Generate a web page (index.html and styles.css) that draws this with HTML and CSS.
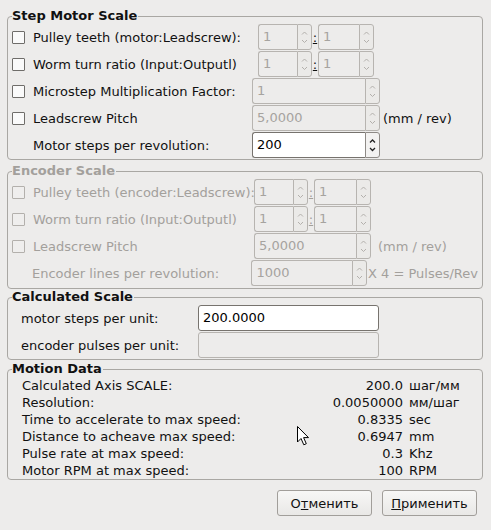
FILE: index.html
```html
<!DOCTYPE html>
<html>
<head>
<meta charset="utf-8">
<link rel="stylesheet" href="styles.css">
</head>
<body>
<div class="dialog">
  <fieldset class="group g-step">
    <legend>Step Motor Scale</legend>
    <div class="row">
      <div class="lbl"><span class="chk"></span>Pulley teeth (motor:Leadscrew):</div>
      <div class="cell cell-step pair-step">
        <div class="spin w-a dis"><div class="field">1</div><div class="btn"><svg width="13" height="24" viewBox="0 0 13 24"><path d="M4 9.5 L6.5 7 L9 9.5 M4 15 L6.5 17.5 L9 15"/></svg></div></div>
        <span class="colon">:</span>
        <div class="spin w-b dis"><div class="field">1</div><div class="btn"><svg width="13" height="24" viewBox="0 0 13 24"><path d="M4 9.5 L6.5 7 L9 9.5 M4 15 L6.5 17.5 L9 15"/></svg></div></div>
      </div>
    </div>
    <div class="row">
      <div class="lbl"><span class="chk"></span>Worm turn ratio (Input:Outputl)</div>
      <div class="cell cell-step pair-step">
        <div class="spin w-a dis"><div class="field">1</div><div class="btn"><svg width="13" height="24" viewBox="0 0 13 24"><path d="M4 9.5 L6.5 7 L9 9.5 M4 15 L6.5 17.5 L9 15"/></svg></div></div>
        <span class="colon">:</span>
        <div class="spin w-b dis"><div class="field">1</div><div class="btn"><svg width="13" height="24" viewBox="0 0 13 24"><path d="M4 9.5 L6.5 7 L9 9.5 M4 15 L6.5 17.5 L9 15"/></svg></div></div>
      </div>
    </div>
    <div class="row">
      <div class="lbl"><span class="chk"></span>Microstep Multiplication Factor:</div>
      <div class="cell cell-step">
        <div class="spin full dis"><div class="field">1</div><div class="btn"><svg width="13" height="24" viewBox="0 0 13 24"><path d="M4 9.5 L6.5 7 L9 9.5 M4 15 L6.5 17.5 L9 15"/></svg></div></div>
      </div>
    </div>
    <div class="row">
      <div class="lbl"><span class="chk"></span>Leadscrew Pitch</div>
      <div class="cell cell-step">
        <div class="spin full dis"><div class="field">5,0000</div><div class="btn"><svg width="13" height="24" viewBox="0 0 13 24"><path d="M4 9.5 L6.5 7 L9 9.5 M4 15 L6.5 17.5 L9 15"/></svg></div></div>
      </div>
      <span class="suffix">(mm / rev)</span>
    </div>
    <div class="row">
      <div class="lbl nochk">Motor steps per revolution:</div>
      <div class="cell cell-step">
        <div class="spin full on"><div class="field">200</div><div class="btn"><svg width="13" height="24" viewBox="0 0 13 24"><path d="M4 9.5 L6.5 7 L9 9.5 M4 15 L6.5 17.5 L9 15"/></svg></div></div>
      </div>
    </div>
  </fieldset>

  <fieldset class="group g-enc disabled">
    <legend>Encoder Scale</legend>
    <div class="row">
      <div class="lbl lbl-enc"><span class="chk"></span>Pulley teeth (encoder:Leadscrew):</div>
      <div class="cell cell-enc pair-enc">
        <div class="spin w-c dis"><div class="field">1</div><div class="btn"><svg width="13" height="24" viewBox="0 0 13 24"><path d="M4 9.5 L6.5 7 L9 9.5 M4 15 L6.5 17.5 L9 15"/></svg></div></div>
        <span class="colon">:</span>
        <div class="spin w-d dis"><div class="field">1</div><div class="btn"><svg width="13" height="24" viewBox="0 0 13 24"><path d="M4 9.5 L6.5 7 L9 9.5 M4 15 L6.5 17.5 L9 15"/></svg></div></div>
      </div>
    </div>
    <div class="row">
      <div class="lbl lbl-enc"><span class="chk"></span>Worm turn ratio (Input:Outputl)</div>
      <div class="cell cell-enc pair-enc">
        <div class="spin w-c dis"><div class="field">1</div><div class="btn"><svg width="13" height="24" viewBox="0 0 13 24"><path d="M4 9.5 L6.5 7 L9 9.5 M4 15 L6.5 17.5 L9 15"/></svg></div></div>
        <span class="colon">:</span>
        <div class="spin w-d dis"><div class="field">1</div><div class="btn"><svg width="13" height="24" viewBox="0 0 13 24"><path d="M4 9.5 L6.5 7 L9 9.5 M4 15 L6.5 17.5 L9 15"/></svg></div></div>
      </div>
    </div>
    <div class="row">
      <div class="lbl lbl-enc"><span class="chk"></span>Leadscrew Pitch</div>
      <div class="cell cell-enc">
        <div class="spin full dis"><div class="field">5,0000</div><div class="btn"><svg width="13" height="24" viewBox="0 0 13 24"><path d="M4 9.5 L6.5 7 L9 9.5 M4 15 L6.5 17.5 L9 15"/></svg></div></div>
      </div>
      <span class="suffix suffix-enc">(mm / rev)</span>
    </div>
    <div class="row">
      <div class="lbl lbl-enc nochk2">Encoder lines per revolution:</div>
      <div class="cell cell-enc">
        <div class="spin full dis"><div class="field">1000</div><div class="btn"><svg width="13" height="24" viewBox="0 0 13 24"><path d="M4 9.5 L6.5 7 L9 9.5 M4 15 L6.5 17.5 L9 15"/></svg></div></div>
      </div>
      <span class="suffix suffix-x4">X 4 = Pulses/Rev</span>
    </div>
  </fieldset>

  <fieldset class="group g-calc">
    <legend>Calculated Scale</legend>
    <div class="calc-row">
      <div class="calc-lbl">motor steps per unit:</div>
      <div class="line on">200.0000</div>
    </div>
    <div class="calc-row">
      <div class="calc-lbl">encoder pulses per unit:</div>
      <div class="line dis"></div>
    </div>
  </fieldset>

  <fieldset class="group g-motion">
    <legend>Motion Data</legend>
    <div class="motion">
      <span>Calculated Axis SCALE:</span><span class="num">200.0</span><span>шаг/мм</span>
      <span>Resolution:</span><span class="num">0.0050000</span><span>мм/шаг</span>
      <span>Time to accelerate to max speed:</span><span class="num">0.8335</span><span>sec</span>
      <span>Distance to acheave max speed:</span><span class="num">0.6947</span><span>mm</span>
      <span>Pulse rate at max speed:</span><span class="num">0.3</span><span>Khz</span>
      <span>Motor RPM at max speed:</span><span class="num">100</span><span>RPM</span>
    </div>
  </fieldset>

  <div class="buttons">
    <button class="pbtn">О<u>т</u>менить</button>
    <button class="pbtn"><u>П</u>рименить</button>
  </div>

  <svg class="cursor" width="13" height="21" viewBox="0 0 13 21"><path d="M0.5 0.5 L0.5 16 L4 12.5 L6.8 18.8 L9.3 17.7 L6.6 11.6 L11.5 11.6 Z" fill="#fff" stroke="#000" stroke-width="1" stroke-linejoin="miter"/></svg>
</div>
</body>
</html>
```
FILE: styles.css
```css
html, body {
  margin: 0;
  padding: 0;
  background: #edeceb;
}
body {
  font-family: "DejaVu Sans", "Liberation Sans", sans-serif;
  font-size: 13px;
  color: #111;
  width: 491px;
  height: 530px;
  overflow: hidden;
}
.dialog {
  position: relative;
  padding: 8px 8px 0 7px;
}
.group {
  margin: 0;
  padding: 0 4px 0 4px;
  border: 1px solid #a9a7a3;
  border-radius: 4px;
  min-width: 0;
}
.group legend {
  font-weight: bold;
  font-size: 13px;
  line-height: 16px;
  padding: 0 1px 0 0;
  color: #111;
}
.g-enc { margin-top: 3px; padding-bottom: 1px; }
.g-calc { margin-top: 0; padding-bottom: 1px; }
.g-motion { margin-top: 1px; }

.disabled, .disabled legend { color: #a3a09c; }

.row {
  display: flex;
  align-items: center;
  height: 26px;
  margin-bottom: 1px;
  white-space: nowrap;
}
.lbl {
  width: 240px;
  display: flex;
  align-items: center;
  overflow: hidden;
  white-space: nowrap;
}
.lbl-enc { width: 242px; }
.nochk { padding-left: 21px; box-sizing: border-box; }
.nochk2 { padding-left: 20px; box-sizing: border-box; }
.chk {
  width: 11px;
  height: 11px;
  border: 1px solid #6f6d6a;
  border-radius: 1px;
  background: #fafafa;
  margin-right: 8px;
  flex: none;
}
.disabled .chk {
  border-color: #b3b0ac;
  background: #efeeed;
}
.cell {
  display: flex;
  align-items: center;
  height: 26px;
}
.cell-step { width: 128px; }
.cell-enc { width: 117px; }
.pair-step { padding-left: 6px; box-sizing: border-box; }

.spin {
  display: flex;
  height: 26px;
  box-sizing: border-box;
}
.spin.full { width: 100%; }
.w-a { width: 54px; }
.w-b { width: 56px; }
.w-c { width: 54px; }
.w-d { width: 57px; }
.spin .field {
  flex: 1;
  border: 1px solid #b7b4b0;
  border-right: none;
  border-radius: 3px 0 0 3px;
  padding-left: 4px;
  line-height: 24px;
  overflow: hidden;
  color: #a6a39f;
}
.spin .btn {
  width: 13px;
  border: 1px solid #b7b4b0;
  border-radius: 0 3px 3px 0;
  background: #ebeae8;
}
.spin .btn svg { display: block; }
.spin .btn path {
  fill: none;
  stroke: #b3b0ac;
  stroke-width: 1;
}
.spin.on .field {
  background: #fff;
  border-color: #77736e;
  color: #000;
}
.spin.on .btn {
  border-color: #8e8a86;
  background: #f3f2f1;
}
.spin.on .btn path {
  stroke: #222;
  stroke-width: 1.3;
}
.colon {
  width: 6px;
  text-align: center;
  text-decoration: underline;
  color: #111;
}
.disabled .colon { color: #a3a09c; }
.suffix { margin-left: 3px; }
.suffix-enc { margin-left: 7px; }
.suffix-x4 { margin-left: 1px; }

.calc-row {
  display: flex;
  align-items: center;
  height: 26px;
  margin-bottom: 1px;
}
.calc-row:last-child { margin-bottom: 0; }
.calc-lbl {
  width: 186px;
  padding-left: 9px;
  box-sizing: border-box;
}
.line {
  width: 181px;
  height: 26px;
  box-sizing: border-box;
  border: 1px solid #b7b4b0;
  border-radius: 3px;
  padding-left: 4px;
  line-height: 24px;
}
.line.on {
  background: #fff;
  border-color: #77736e;
  color: #000;
}

.motion {
  display: grid;
  grid-template-columns: 260px 115px auto;
  column-gap: 6px;
  padding-left: 10px;
  line-height: 17px;
}
.motion .num { text-align: right; }

.buttons {
  display: flex;
  justify-content: flex-end;
  gap: 10px;
  margin-top: 10px;
  padding-right: 6px;
}
.pbtn {
  width: 95px;
  height: 26px;
  font-family: "DejaVu Sans", "Liberation Sans", sans-serif;
  font-size: 13px;
  color: #111;
  background: linear-gradient(#f7f7f6, #e9e8e6);
  border: 1px solid #a19e9a;
  border-radius: 3px;
  padding: 0;
}
.pbtn u { text-decoration: underline; }

.cursor {
  position: absolute;
  left: 297px;
  top: 426px;
}
```
